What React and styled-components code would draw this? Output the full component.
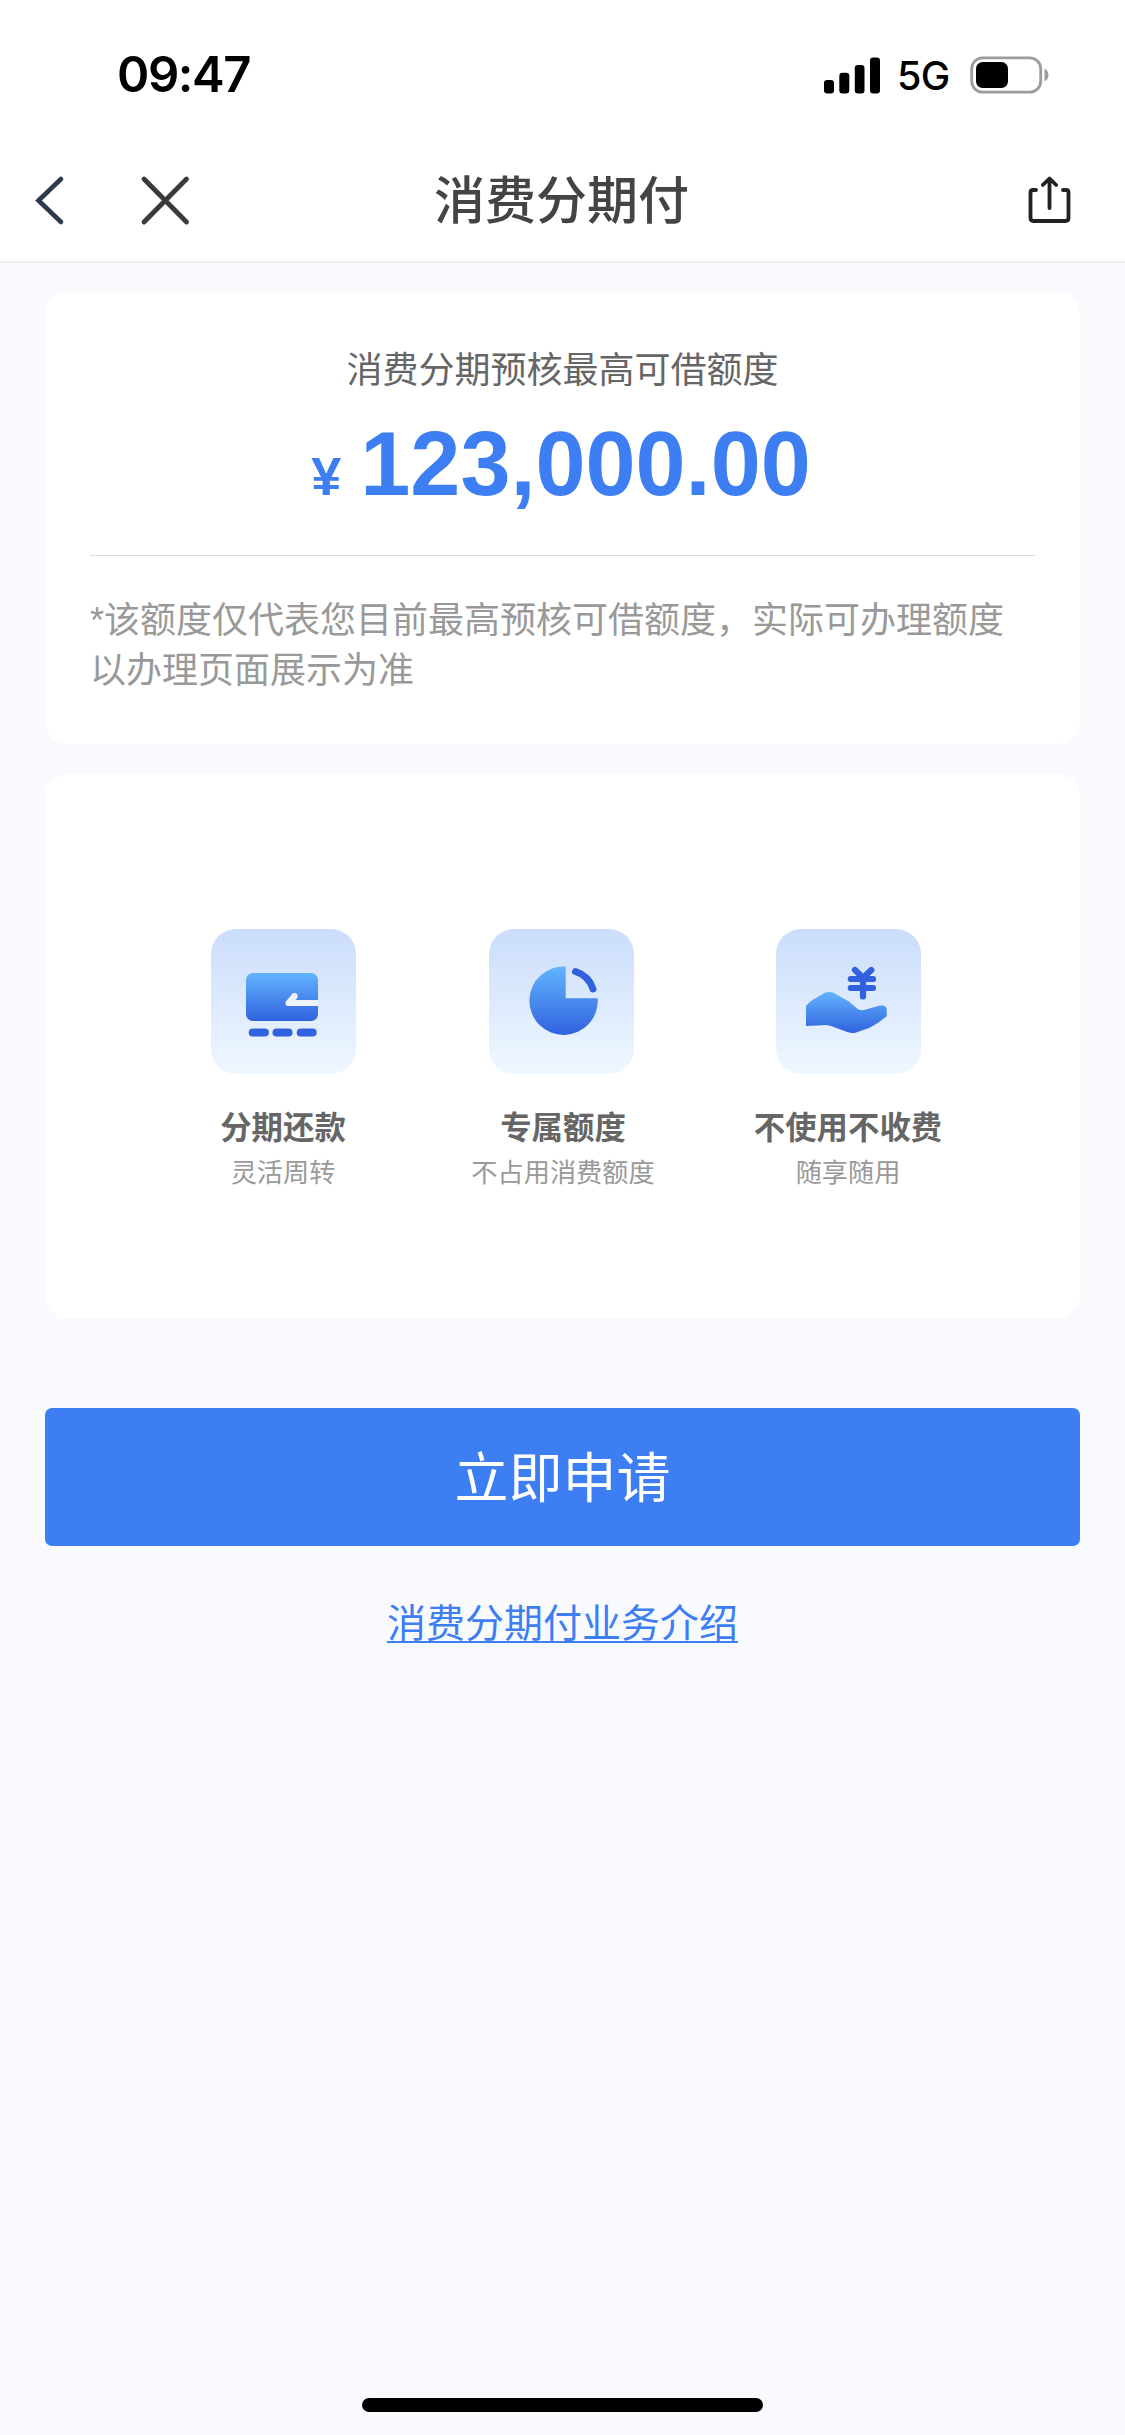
import React from "react";
import styled, { createGlobalStyle } from "styled-components";

const GlobalStyle = createGlobalStyle`
  * { box-sizing: border-box; }
  body {
    margin: 0;
    background: #f9fafe;
    font-family: "Liberation Sans", "Noto Sans CJK SC", sans-serif;
  }
`;

const Screen = styled.div`
  width: 1125px;
  height: 2435px;
  display: flex;
  flex-direction: column;
  background: #f9fafe;
  overflow: hidden;
`;

const StatusBar = styled.header`
  height: 141px;
  padding: 45px 76px 36px 117px;
  display: flex;
  align-items: center;
  justify-content: space-between;
  background: #fff;
  color: #000;
  font-family: Inter, sans-serif;
`;

const Clock = styled.span`
  font-size: 49px;
  font-weight: 600;
  line-height: 60px;
  letter-spacing: -1.4px;
`;

const StatusIcons = styled.div`
  display: flex;
  align-items: center;
`;

const Network = styled.span`
  width: 54px;
  margin: 2px 19px 0 16px;
  font-size: 39.5px;
  line-height: 48px;
  font-weight: 500;
  letter-spacing: -0.6px;
  white-space: nowrap;
`;

const NavBar = styled.nav`
  height: 122px;
  padding: 0 51px 3px 32px;
  display: grid;
  grid-template-columns: 200px 1fr 181px;
  align-items: center;
  background: #fff;
  border-bottom: 2px solid #eeeef0;
`;

const NavActions = styled.div`
  display: flex;
  gap: 70px;
`;

const IconButton = styled.button`
  display: flex;
  justify-content: ${(p) => (p.$end ? "flex-end" : "flex-start")};
  padding: 0;
  border: 0;
  background: none;
`;

const Title = styled.h1`
  margin: 0 2px 0 0;
  padding-top: 5px;
  text-align: center;
  font-size: 51px;
  line-height: 60px;
  font-weight: 500;
  color: #444;
`;

const Content = styled.main`
  flex: 1;
  padding: 29px 45px 0;
  display: flex;
  flex-direction: column;
`;

const Card = styled.section`
  height: ${(p) => p.$height}px;
  padding: ${(p) => p.$padding || "0"};
  margin-bottom: ${(p) => p.$gap}px;
  background: #fff;
  border-radius: 23px;
`;

const QuotaLabel = styled.p`
  margin: 0;
  text-align: center;
  font-size: 36px;
  line-height: 50px;
  color: #666;
`;

const Amount = styled.div`
  display: flex;
  justify-content: center;
  align-items: baseline;
  gap: 19px;
  height: 159px;
  padding: 16px 3px 0 0;
  font-weight: 700;
  font-size: 90px;
  line-height: 104px;
  color: #3d7ef3;
`;

const Currency = styled.span`
  font-size: 54px;
`;

const Note = styled.p`
  margin: 0;
  padding-top: 40px;
  border-top: 1px solid #dcdcdc;
  font-size: 36px;
  line-height: 49.5px;
  color: #999;
`;

const Features = styled.div`
  display: grid;
  grid-template-columns: 280px 280px 290px;
  padding: 155px 0 0 98px;
`;

const Feature = styled.div`
  display: flex;
  flex-direction: column;
  align-items: center;
`;

const Tile = styled.div`
  width: 145px;
  height: 145px;
  margin-right: ${(p) => p.$shift || 0}px;
  border-radius: 25px;
  background: linear-gradient(#cbddfb, #eff7ff);
`;

const FeatureTitle = styled.h2`
  margin: 33px 0 0;
  font-size: 31.4px;
  line-height: 44px;
  font-weight: 700;
  color: #666;
`;

const FeatureText = styled.p`
  margin: 4px 0 0;
  font-size: 26.2px;
  line-height: 36px;
  color: #999;
`;

const ApplyButton = styled.button`
  height: 138px;
  padding: 3px 0 0;
  border: 0;
  border-radius: 7px;
  background: #3d7ef3;
  color: #fff;
  font-family: inherit;
  font-size: 54px;
  line-height: 76px;
`;

const IntroLink = styled.a`
  align-self: center;
  margin-top: 50px;
  font-size: 39px;
  line-height: 56px;
  color: #3d7ef3;
  text-decoration: underline;
  text-decoration-thickness: 2px;
  text-decoration-skip-ink: none;
  text-underline-offset: 4px;
`;

const HomeIndicator = styled.div`
  align-self: center;
  width: 401px;
  height: 14px;
  margin-bottom: 23px;
  border-radius: 7px;
  background: #000;
`;

const SignalIcon = () => (
  <svg width="57" height="37" viewBox="0 0 57 37">
    <rect x="0" y="23" width="10" height="13.5" rx="3.2" />
    <rect x="15.3" y="15.7" width="10" height="20.8" rx="3.2" />
    <rect x="30.8" y="8" width="9.7" height="28.5" rx="3.2" />
    <rect x="46" y="0.5" width="10" height="36" rx="3.2" />
  </svg>
);

const BatteryIcon = () => (
  <svg width="79" height="38" viewBox="0 0 79 38">
    <rect x="1.7" y="1.8" width="69" height="34.4" rx="11" fill="none" stroke="#9c9c9c" strokeWidth="2.8" />
    <rect x="6" y="6" width="32" height="26" rx="6.5" />
    <path d="M74.500 12.800c5.300 2 5.300 10.400 0 12.400z" fill="#9c9c9c" />
  </svg>
);

const BackIcon = () => (
  <svg width="38" height="56" viewBox="0 0 38 56" fill="none" stroke="#2c3a4c" strokeWidth="4.6" strokeLinecap="round">
    <path d="M29 7L6.500 28.500L29 50" />
  </svg>
);

const CloseIcon = () => (
  <svg width="54" height="56" viewBox="0 0 54 56" fill="none" stroke="#3a3a3a" strokeWidth="4.8" strokeLinecap="round">
    <path d="M4 7L46.500 50M46.500 7L4 50" />
  </svg>
);

const ShareIcon = () => (
  <svg width="50" height="56" viewBox="0 0 50 56" fill="none" stroke="#222" strokeWidth="3.8" strokeLinecap="round" strokeLinejoin="round">
    <path d="M12 18H9.500Q6.500 18 6.500 20.500V46Q6.500 49 9.500 49H41.500Q44.500 49 44.500 46V20.500Q44.500 18 42 18H39" />
    <path d="M25.500 36V8M18.800 13L25.500 6.500L32.200 13" />
  </svg>
);

const IconGradient = ({ id }) => (
  <linearGradient id={id} x1="0" y1="0" x2="0" y2="1">
    <stop offset="0" stopColor="#62b4fe" />
    <stop offset="1" stopColor="#3062de" />
  </linearGradient>
);

const RepayIcon = () => (
  <svg width="145" height="145" viewBox="0 0 145 145">
    <defs><IconGradient id="repay" /></defs>
    <rect x="35" y="44" width="72" height="48" rx="7" fill="url(#repay)" />
    <path d="M107 74H77.500L83.500 67.200" fill="none" stroke="#eef2fb" strokeWidth="6.200" strokeLinejoin="round" />
    <circle cx="83.500" cy="67.200" r="3.100" fill="#eef2fb" />
    <path d="M41.800 103.500H53.800M65.600 103.500H77.500M89.800 103.500H101.600" stroke="#3062de" strokeWidth="8.200" strokeLinecap="round" />
  </svg>
);

const QuotaIcon = () => (
  <svg width="145" height="145" viewBox="0 0 145 145">
    <defs><IconGradient id="quota" /></defs>
    <path d="M76.700 37.600V69.300H108.700A34.200 34.200 0 1 1 76.700 37.600z" fill="url(#quota)" />
    <path d="M86.500 42.500A27 27 0 0 1 104 60" fill="none" stroke="#3062de" strokeWidth="7" strokeLinecap="round" />
  </svg>
);

const FreeIcon = () => (
  <svg width="145" height="145" viewBox="0 0 145 145">
    <defs><IconGradient id="free" /></defs>
    <path d="M30 77Q33.500 72.500 38 70L49 63.800Q52 62.300 57 63.500L73 72.500L81 79.500Q83.500 81.800 88 81L104 76.600Q110.700 75.500 110.700 81V87.300Q103 94 93 99L80 103.500Q76.500 104.600 72 103.300L55 97Q51 95.800 46 96.200L30 97z" fill="url(#free)" />
    <path d="M79 41L87 48.700L95.300 41M74.800 50H97M74.800 59H97M87 50V67.500" fill="none" stroke="#3062de" strokeWidth="6.200" strokeLinecap="round" strokeLinejoin="round" />
  </svg>
);

const FEATURES = [
  { title: "分期还款", text: "灵活周转", Icon: RepayIcon, shift: 0 },
  { title: "专属额度", text: "不占用消费额度", Icon: QuotaIcon, shift: 3 },
  { title: "不使用不收费", text: "随享随用", Icon: FreeIcon, shift: 0 },
];

export default function App() {
  return (
    <Screen>
      <GlobalStyle />
      <StatusBar>
        <Clock>09:47</Clock>
        <StatusIcons>
          <SignalIcon />
          <Network>5G</Network>
          <BatteryIcon />
        </StatusIcons>
      </StatusBar>
      <NavBar>
        <NavActions>
          <IconButton aria-label="返回"><BackIcon /></IconButton>
          <IconButton aria-label="关闭"><CloseIcon /></IconButton>
        </NavActions>
        <Title>消费分期付</Title>
        <IconButton $end aria-label="分享"><ShareIcon /></IconButton>
      </NavBar>
      <Content>
        <Card $height={452} $gap={30} $padding="54px 45px 0">
          <QuotaLabel>消费分期预核最高可借额度</QuotaLabel>
          <Amount>
            <Currency>¥</Currency>
            <span>123,000.00</span>
          </Amount>
          <Note>*该额度仅代表您目前最高预核可借额度，实际可办理额度以办理页面展示为准</Note>
        </Card>
        <Card $height={544} $gap={90}>
          <Features>
            {FEATURES.map(({ title, text, Icon, shift }) => (
              <Feature key={title}>
                <Tile $shift={shift}><Icon /></Tile>
                <FeatureTitle>{title}</FeatureTitle>
                <FeatureText>{text}</FeatureText>
              </Feature>
            ))}
          </Features>
        </Card>
        <ApplyButton>立即申请</ApplyButton>
        <IntroLink>消费分期付业务介绍</IntroLink>
      </Content>
      <HomeIndicator />
    </Screen>
  );
}
